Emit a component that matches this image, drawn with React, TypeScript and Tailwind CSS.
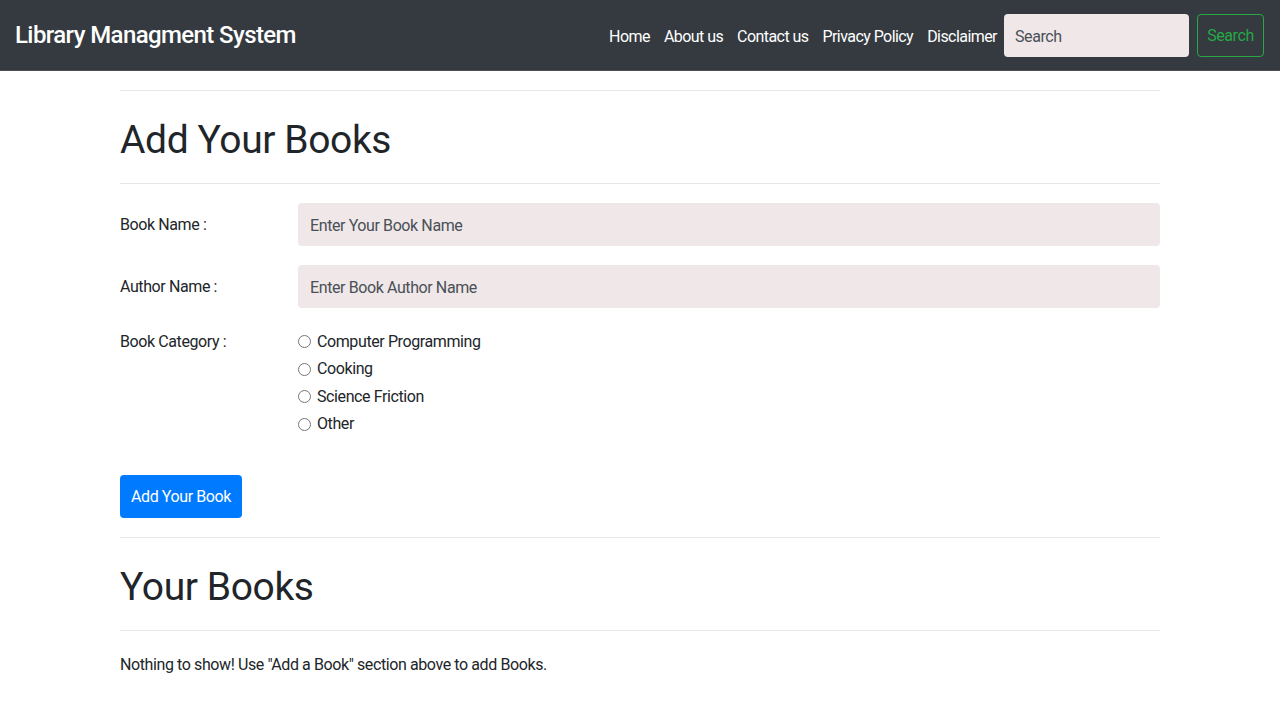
const font = { fontFamily: "Roboto, 'Liberation Sans', sans-serif" };

const navLinks = ['Home', 'About us', 'Contact us', 'Privacy Policy', 'Disclaimer'];
const categories = ['Computer Programming', 'Cooking', 'Science Friction', 'Other'];

const Navbar = () => (
  <nav className="flex h-[71px] items-center justify-between border-b border-[#4a4f55] bg-[#343a40] pl-[15px] pr-[16px]">
    <a href="#" className="text-[24px] font-medium tracking-[-0.025em] text-white">
      Library Managment System
    </a>
    <div className="flex items-center">
      <ul className="mt-[4px] flex items-center">
        {navLinks.map((link) => (
          <li key={link}>
            <a href="#" className="block px-[7px] text-[16px] tracking-[-0.035em] text-white">
              {link}
            </a>
          </li>
        ))}
      </ul>
      <input
        type="search"
        placeholder="Search"
        className="h-[43px] w-[185px] rounded-[4px] bg-[#f0e7e8] px-[11px] pt-[2px] text-[16px] tracking-[-0.025em] text-[#495057] placeholder:text-[#495057] outline-none"
      />
      <button className="ml-[8px] h-[43px] w-[67px] rounded-[4px] border border-[#28a745] pt-[2px] text-[16px] tracking-[-0.025em] text-[#28a745]">
        Search
      </button>
    </div>
  </nav>
);

const Divider = () => <hr className="border-0 border-t border-[#e6e6e6]" />;

const TextInput = ({ placeholder }: { placeholder: string }) => (
  <input
    type="text"
    placeholder={placeholder}
    className="h-[43px] w-full rounded-[4px] bg-[#f0e7e8] px-[12px] pt-[2px] text-[16px] tracking-[-0.025em] text-[#495057] placeholder:text-[#495057] outline-none"
  />
);

export default function App() {
  return (
    <div className="min-h-screen bg-white text-[16px] tracking-[-0.025em] text-[#212529]" style={font}>
      <Navbar />
      <main className="mx-auto w-[1040px] pt-[19px]">
        <Divider />
        <h1 className="mt-[22px] mb-[15px] text-[39px] leading-[55px]">Add Your Books</h1>
        <Divider />

        <form className="mt-[19px] flex flex-col gap-[19px]">
          <div className="flex items-center">
            <label className="w-[178px] shrink-0 pt-[1px]">Book Name :</label>
            <div className="flex-1">
              <TextInput placeholder="Enter Your Book Name" />
            </div>
          </div>
          <div className="flex items-center">
            <label className="w-[178px] shrink-0 pt-[1px]">Author Name :</label>
            <div className="flex-1">
              <TextInput placeholder="Enter Book Author Name" />
            </div>
          </div>
          <div className="flex items-start">
            <label className="w-[178px] shrink-0 pt-[1px] leading-[28px]">Book Category :</label>
            <div className="flex-1 pt-[1px]">
              {categories.map((cat) => (
                <label key={cat} className="flex h-[27.5px] items-center">
                  <input type="radio" name="category" className="m-0 h-[13px] w-[13px]" />
                  <span className="ml-[6px]">{cat}</span>
                </label>
              ))}
            </div>
          </div>
          <div className="mt-[18px]">
            <button
              type="button"
              className="h-[43px] w-[122px] rounded-[4px] bg-[#007bff] pt-[1px] text-white"
            >
              Add Your Book
            </button>
          </div>
        </form>

        <div className="mt-[19px]">
          <Divider />
        </div>
        <h1 className="mt-[22px] mb-[15px] text-[39px] leading-[55px]">Your Books</h1>
        <Divider />
        <p className="mt-[20px] leading-[27px]">
          Nothing to show! Use "Add a Book" section above to add Books.
        </p>
      </main>
    </div>
  );
}
